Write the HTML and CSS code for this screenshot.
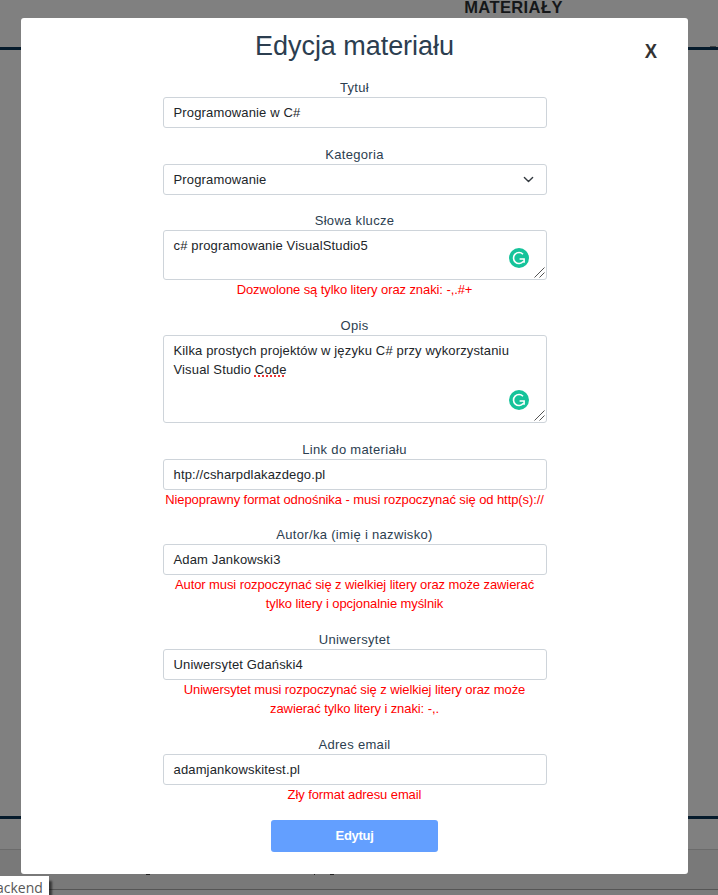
FILE: index.html
```html
<!DOCTYPE html>
<html lang="pl">
<head>
<meta charset="utf-8">
<title>Edycja materiału</title>
<link rel="stylesheet" href="styles.css">
</head>
<body>
<div class="page">
  <header class="page-head"><span class="page-title">MATERIAŁY</span></header>
  <main class="page-main"></main>
  <div class="page-gap"></div>
  <div class="page-row"></div>
  <div class="page-foot"></div>
</div>

<div class="marks"><i class="mark"></i><i class="mark comma"></i><i class="mark"></i></div>
<i class="corner"></i>

<section class="modal">
  <button class="close">X</button>
  <h1 class="title"><span>Edycja materiału</span></h1>
  <form class="form">
    <div class="field">
      <label class="label"><span>Tytuł</span></label>
      <div class="control"><span>Programowanie w C#</span></div>
    </div>
    <div class="field">
      <label class="label"><span>Kategoria</span></label>
      <div class="control select"><span>Programowanie</span>
        <svg class="chevron" viewBox="0 0 16 16"><path d="M2 5l6 6 6-6" fill="none" stroke="#343a40" stroke-width="2" stroke-linecap="round" stroke-linejoin="round"/></svg>
      </div>
    </div>
    <div class="field">
      <label class="label"><span>Słowa klucze</span></label>
      <div class="control area keys"><span>c# programowanie VisualStudio5</span>
        <svg class="badge" viewBox="0 0 20 20"><circle cx="10" cy="10" r="10" fill="#15c39a"/><path d="M14 6.2A5.5 5.5 0 1 0 14.2 13.6M10.6 11H15.1V14.8" fill="none" stroke="#fff" stroke-width="1.6"/></svg>
        <svg class="grip" viewBox="0 0 11 11"><path d="M.5 10.5l10-10M5.5 10.5l5-5" stroke="#555" fill="none"/></svg>
      </div>
      <p class="error"><span>Dozwolone są tylko litery oraz znaki: -,.#+</span></p>
    </div>
    <div class="field">
      <label class="label"><span>Opis</span></label>
      <div class="control area desc"><span>Kilka prostych projektów w języku C# przy wykorzystaniu<br>Visual Studio <span class="typo">Code</span></span>
        <svg class="badge" viewBox="0 0 20 20"><circle cx="10" cy="10" r="10" fill="#15c39a"/><path d="M14 6.2A5.5 5.5 0 1 0 14.2 13.6M10.6 11H15.1V14.8" fill="none" stroke="#fff" stroke-width="1.6"/></svg>
        <svg class="grip" viewBox="0 0 11 11"><path d="M.5 10.5l10-10M5.5 10.5l5-5" stroke="#555" fill="none"/></svg>
      </div>
    </div>
    <div class="field">
      <label class="label"><span>Link do materiału</span></label>
      <div class="control"><span>htp://csharpdlakazdego.pl</span></div>
      <p class="error"><span>Niepoprawny format odnośnika - musi rozpoczynać się od http(s)://</span></p>
    </div>
    <div class="field">
      <label class="label"><span>Autor/ka (imię i nazwisko)</span></label>
      <div class="control"><span>Adam Jankowski3</span></div>
      <p class="error">Autor musi rozpoczynać się z wielkiej litery oraz może zawierać<br>tylko litery i opcjonalnie myślnik</p>
    </div>
    <div class="field">
      <label class="label"><span>Uniwersytet</span></label>
      <div class="control"><span>Uniwersytet Gdański4</span></div>
      <p class="error">Uniwersytet musi rozpoczynać się z wielkiej litery oraz może<br>zawierać tylko litery i znaki: -,.</p>
    </div>
    <div class="field">
      <label class="label"><span>Adres email</span></label>
      <div class="control"><span>adamjankowskitest.pl</span></div>
      <p class="error"><span>Zły format adresu email</span></p>
    </div>
    <button class="submit" type="button">Edytuj</button>
  </form>
</section>

<div class="tip">ackend</div>
</body>
</html>
```
FILE: styles.css
```css
* { box-sizing: border-box; }
body {
  margin: 0;
  height: 895px;
  position: relative;
  overflow: hidden;
  background: #808080;
  font-family: "Liberation Sans", Arial, sans-serif;
  font-size: 13px;
}
.page { display: flex; flex-direction: column; height: 895px; }
.page-head {
  flex: 0 0 50px;
  border-bottom: 3px solid #061b2c;
  padding-left: 309px;
  text-align: center;
}
.page-title {
  display: block;
  font-size: 16.5px;
  font-weight: bold;
  line-height: 18px;
  letter-spacing: .4px;
  margin-top: -2px;
  color: #151719;
}
.page-main { flex: 0 0 769px; border-bottom: 3px solid #061b2c; }
.page-gap { flex: 0 0 31px; border-bottom: 1px solid #6b6b6b; }
.page-row { flex: 0 0 40px; background: #797979; border-bottom: 1px solid #555; }
.page-foot { flex: 1; background: #7c7c7c; }
.marks {
  position: absolute;
  left: 146px;
  top: 874px;
  display: flex;
  align-items: flex-start;
}
.mark { width: 4px; height: 1px; background: #222; margin-right: 164px; }
.comma { width: 1px; margin-right: 15px; }
.mark:last-child { margin-right: 0; }
.corner { position: absolute; left: 710px; top: 46px; width: 6px; height: 1px; background: #444; }
.modal {
  position: absolute;
  left: 21px;
  top: 18px;
  width: 667px;
  height: 856px;
  background: #fff;
  border-radius: 3px;
  padding-top: 10px;
}
.close {
  position: absolute;
  right: 27px;
  top: 20px;
  width: 20px;
  padding: 0;
  border: 0;
  background: none;
  font: bold 20px/26px "Liberation Sans", Arial, sans-serif;
  color: #333;
  text-align: center;
  transform: scaleX(.92);
}
.title {
  margin: 0;
  height: 50px;
  line-height: 37px;
  text-align: center;
  font-size: 27px;
  letter-spacing: -.05px;
  font-weight: normal;
  color: #2c3e50;
}
.form {
  width: 384px;
  margin: 0 auto 0 142px;
  color: #212529;
  letter-spacing: .15px;
}
.field { margin-bottom: 16.68px; }
.field:nth-last-of-type(1) { margin-top: 17px; margin-bottom: 16px; }
.label {
  display: block;
  height: 19px;
  line-height: 19px;
  padding-right: 1px;
  text-align: center;
  letter-spacing: .32px;
  color: #2c3e50;
}
.control {
  height: 31px;
  border: 1px solid #ced4da;
  border-radius: 3px;
  padding: 5px 10px 5px 9.5px;
  line-height: 19px;
  white-space: nowrap;
}
.select { display: flex; justify-content: space-between; }
.chevron { width: 11px; height: 11px; margin: 4px 2px 0 0; }
.area { position: relative; }
.keys { height: 50px; }
.desc { height: 88px; }
.badge { position: absolute; right: 17px; bottom: 11px; width: 20px; height: 20px; }
.desc .badge { bottom: 12px; }
.grip { position: absolute; right: 1px; bottom: 1px; width: 11px; height: 11px; }
.typo {
  text-decoration: underline dotted #e33 2px;
  text-underline-offset: 1px;
  text-decoration-skip-ink: none;
}
.error {
  margin: 0;
  padding-right: 1px;
  line-height: 19px;
  text-align: center;
  letter-spacing: -.09px;
  color: #f00;
  white-space: nowrap;
}
.submit {
  display: block;
  width: 167px;
  height: 32px;
  margin: 0 auto 0 108px;
  border: 0;
  border-radius: 3px;
  background: #639fff;
  color: #fff;
  font: bold 13px/30px "Liberation Sans", Arial, sans-serif;
  letter-spacing: -.3px;
}
.tip {
  position: absolute;
  left: 0;
  top: 876px;
  width: 49px;
  height: 19px;
  background: #fff;
  box-shadow: 3px 5px 2px rgba(0, 0, 0, .55);
  color: #575757;
  font: 14px/23px "Open Sans", "Noto Sans", sans-serif;
  text-indent: -4px;
  white-space: nowrap;
}
```
